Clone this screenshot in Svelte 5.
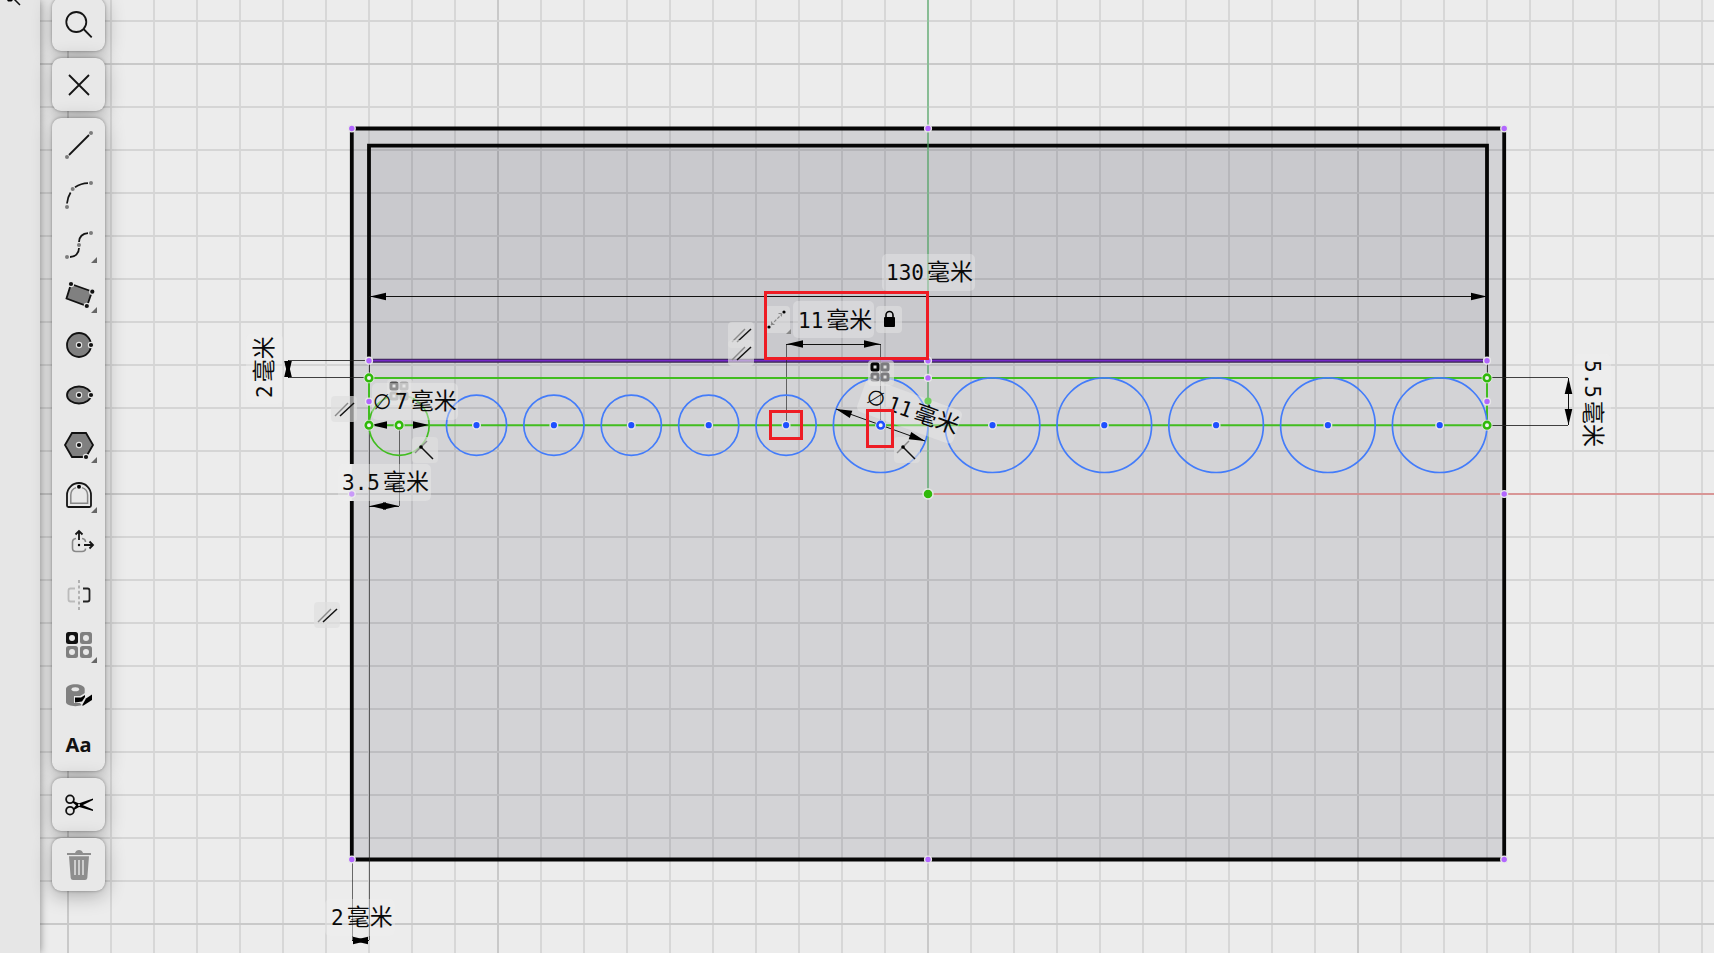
<script>
  // Canvas scale and origin: 1 mm = 8.6 units, y points down.
  const SCALE = 8.6;
  const X = (mm) => 928 + mm * SCALE;
  const Y = (mm) => 494 + mm * SCALE;

  const range = (from, to) => Array.from({ length: to - from + 1 }, (_, i) => from + i);
  const columns = range(-21, 18);
  const rows = range(-11, 10);

  // The sketch, in millimetres from the origin
  const left = -65;
  const right = 65;
  const baseLine = -8; // centre line of all holes
  const topLine = baseLine - 5.5;
  const pocket = topLine - 2;

  const smallHoles = [1, 2, 3, 4, 5].map((i) => -61.5 + i * 9);
  const largeHoles = [0, 1, 2, 3, 4, 5].map((i) => -5.5 + i * 13);

  const purplePoints = [
    [-67, -42.5], [0, -42.5], [67, -42.5],
    [-67, 42.5], [0, 42.5], [67, 42.5],
    [-67, 0], [67, 0],
    [left, pocket], [0, pocket], [right, pocket],
    [left, baseLine - 2.75], [right, baseLine - 2.75],
    [0, topLine],
  ];

  const greenPoints = [
    [left, topLine], [left, baseLine], [-61.5, baseLine],
    [right, topLine], [right, baseLine],
  ];

  const labels = [
    { value: "130", x: 886, y: 280, bg: [-4, -26, 93, 37] },
    { value: "11", x: 798, y: 328, bg: [-5, -27, 81, 37] },
    { value: "7", sign: true, x: 373, y: 409, bg: [-1, -26, 86, 37] },
    { value: "3.5", x: 342, y: 490, bg: [-4, -26, 93, 37] },
    { value: "2", x: 331, y: 925, bg: [-6, -26, 70, 37] },
    { value: "2", x: 272, y: 398, angle: -90, bg: [-6, -26, 70, 37] },
    { value: "5.5", x: 1585, y: 360, angle: 90, bg: [-6, -26, 96, 37] },
    { value: "11", sign: true, x: 865, y: 402, angle: 19.8, bg: [-6, -24, 102, 35] },
  ];
</script>

{#snippet corner()}
  <path d="M45 37v6h-6z" fill="#666" />
{/snippet}

{#snippet node(x, y)}
  <circle cx={x} cy={y} r="3.2" fill="#e6e6e6" />
  <circle cx={x} cy={y} r="2.1" fill="#111" />
{/snippet}

{#snippet arrow(x, y, angle)}
  <path d="M0 0L16 -3.8V3.8z" transform="translate({x} {y}) rotate({angle})" />
{/snippet}

{#snippet ring(x, y, color)}
  <circle cx={x} cy={y} r="5.4" fill="#e8e8e8" />
  <circle cx={x} cy={y} r="3.3" fill="#f2f2f2" stroke={color} stroke-width="2.6" />
{/snippet}

{#snippet parallel(x, y)}
  <g transform="translate({x} {y})">
    <rect class="badge" width="26" height="26" rx="4" />
    <path d="M4 20L17 7" stroke="#8a8a8a" stroke-width="1.5" />
    <path d="M9 20L23 7" stroke="#111" stroke-width="1.5" />
  </g>
{/snippet}

{#snippet tangent(x, y)}
  <g transform="translate({x} {y})">
    <rect class="badge" width="26" height="26" rx="4" />
    <path d="M3 16L15 4" stroke="#8a8a8a" stroke-width="1.5" />
    <path d="M9 10L21 22" stroke="#111" stroke-width="1.5" />
    <circle cx="9" cy="10" r="1.8" />
  </g>
{/snippet}

{#snippet pattern(x, y, first, rest)}
  <g transform="translate({x} {y})" fill="#e0e0e0" stroke-width="3">
    <rect class="badge" x="-7" y="-7" width="26" height="26" rx="4" />
    <rect x="-3" y="-3" width="6" height="6" rx="1" stroke={first} />
    <rect x="7" y="-3" width="6" height="6" rx="1" stroke={rest} />
    <rect x="-3" y="7" width="6" height="6" rx="1" stroke={rest} />
    <rect x="7" y="7" width="6" height="6" rx="1" stroke={rest} />
  </g>
{/snippet}

<div class="editor">
  <svg class="canvas" viewBox="0 0 1714 953" preserveAspectRatio="xMinYMin slice">
    <g stroke="#d5d5d5" stroke-width="1.8">
      {#each columns as i}
        <line x1={X(i * 5)} x2={X(i * 5)} y1="0" y2="953" class:major={i % 10 === 0} />
      {/each}
      {#each rows as i}
        <line x1="0" x2="1714" y1={Y(i * 5)} y2={Y(i * 5)} class:major={i % 10 === 0} />
      {/each}
    </g>

    <!-- Plate and pocket; the left edge is open behind the 3.5 label -->
    <rect x={X(-67)} y={Y(-42.5)} width={134 * SCALE} height={85 * SCALE} fill="#00001a" fill-opacity="0.106" />
    <rect x={X(left)} y={Y(-40.5)} width={130 * SCALE} height={(pocket + 40.5) * SCALE} fill="#00001a" fill-opacity="0.045" />
    <g fill="none" stroke="#060606" stroke-width="3.8">
      <path d="M{X(-67)} 464V{Y(-42.5)}H{X(67)}V{Y(42.5)}H{X(-67)}V501" />
      <path d="M{X(left)} {Y(pocket)}V{Y(-40.5)}H{X(right)}V{Y(pocket)}" />
    </g>
    <path d="M928 0V494" stroke="#55b36c" stroke-opacity="0.7" stroke-width="1.6" />
    <path d="M928 494H1714" stroke="#dc8484" stroke-width="1.6" />
    <path d="M{X(left)} {Y(pocket)}H{X(right)}" stroke="#37254c" stroke-width="4" />
    <path d="M{X(left)} {Y(pocket)}H{X(right)}" stroke="#7629c9" stroke-width="1.8" />

    <!-- Extension lines -->
    <g stroke="#222" stroke-opacity="0.85" stroke-width="1">
      <path d="M288 360.5H369M288 377.5H369M1487 377.5H1568M1487 425.5H1568M1487.5 360V378M369.5 360V378" />
      <path d="M369.5 425V940M399.5 425V506M352.5 860V940M786.5 344V425M880.5 344V425" stroke-opacity="0.65" />
    </g>

    <!-- Construction lines and holes -->
    <g fill="none" stroke="#42bd21" stroke-width="2">
      <path d="M{X(left)} {Y(topLine)}H{X(right)}V{Y(baseLine)}H{X(left)}z" />
      <circle cx={X(-61.5)} cy={Y(baseLine)} r={3.5 * SCALE} stroke-width="1.7" />
    </g>
    <g fill="none" stroke="#437cfa" stroke-width="1.7">
      {#each smallHoles as x}
        <circle cx={X(x)} cy={Y(baseLine)} r={3.5 * SCALE} />
      {/each}
      {#each largeHoles as x}
        <circle cx={X(x)} cy={Y(baseLine)} r={5.5 * SCALE} />
      {/each}
    </g>

    {#each purplePoints as [x, y]}
      <circle class="point" cx={X(x)} cy={Y(y)} r="3.4" fill="#b266ff" />
    {/each}
    {#each [...smallHoles, ...largeHoles.slice(1)] as x}
      <circle class="point" cx={X(x)} cy={Y(baseLine)} r="3.8" fill="#1f50ff" />
    {/each}
    <circle class="point" cx="928" cy="494" r="5" fill="#30b90a" />

    <!-- Constraint badges -->
    {@render parallel(331, 396)}
    {@render parallel(314, 602)}
    {@render parallel(728, 322)}
    {@render parallel(728, 340)}
    {@render tangent(412, 437)}
    {@render tangent(894, 437)}
    {@render pattern(394, 386, "#555", "#aaa")}
    {@render pattern(875, 367, "#050505", "#7c7c7f")}

    <!-- Dimension lines -->
    <g stroke="#111" stroke-width="1">
      <path d="M369 296.5H1487M786 344.5H881M1568.5 378V425M288.5 360V378M369 506.5H399M352 940.5H369M836 409L925 441" />
    </g>
    {@render arrow(370, 296.5, 0)}
    {@render arrow(1487, 296.5, 180)}
    {@render arrow(787, 344, 0)}
    {@render arrow(880, 344, 180)}
    {@render arrow(1568.5, 378, 90)}
    {@render arrow(1568.5, 425, -90)}
    {@render arrow(288, 361, 90)}
    {@render arrow(288, 377, -90)}
    {@render arrow(370, 506, 0)}
    {@render arrow(399, 506, 180)}
    {@render arrow(352, 940.5, 0)}
    {@render arrow(369, 940.5, 180)}
    {@render arrow(371, 425, 0)}
    {@render arrow(429, 425, 180)}
    {@render arrow(836, 409, 19.8)}
    {@render arrow(925, 441, 199.8)}

    {#each labels as { value, sign, x, y, angle, bg }}
      <g transform="translate({x} {y}) rotate({angle ?? 0})">
        <rect class="label" x={bg[0]} y={bg[1]} width={bg[2]} height={bg[3]} rx="5" />
        {#if sign}
          <text class="sign">∅</text>
        {/if}
        <text x={sign ? 22 : 0}>{value}<tspan class="unit" dx="3">毫米</tspan></text>
      </g>
    {/each}

    <circle cx="928" cy="401" r="3.6" fill="#70cf5e" />
    {#each greenPoints as [x, y]}
      {@render ring(X(x), Y(y), "#30b90a")}
    {/each}
    {@render ring(X(-5.5), Y(baseLine), "#1f50ff")}

    <!-- Dimension type and lock -->
    <g transform="translate(764 306)">
      <rect class="badge" width="26" height="27" rx="4" />
      <circle cx="5" cy="21" r="1.6" />
      <circle cx="20" cy="6" r="1.6" />
      <path d="M7 19L18 8" stroke="#888" stroke-width="1.2" stroke-dasharray="3 1.5" />
      <path d="M7.5 15.5V18.5H10.5M14.5 7.5H17.5V10.5" fill="none" stroke="#888" />
      <path d="M27 23v5h-5z" fill="#888" />
    </g>
    <g transform="translate(876 306)">
      <rect class="badge" width="26" height="27" rx="4" />
      <rect x="8" y="11" width="11" height="10" rx="1" />
      <path d="M10 12V9a3.5 3.5 0 0 1 7 0V12" fill="none" stroke="#000" stroke-width="1.6" />
    </g>

    <!-- Highlights -->
    <g fill="none" stroke="#ee1c24" stroke-width="3">
      <rect x="765.5" y="292.5" width="162" height="66" />
      <rect x="770.5" y="411.5" width="31" height="27" />
      <rect x="867.5" y="410.5" width="25" height="36" />
    </g>
  </svg>

  <aside class="panel">
    <svg width="40" height="8" viewBox="0 0 40 8" aria-hidden="true">
      <path d="M7 0h6l-1.5 1.5h-3.5z" />
      <path d="M14 -1L20 5" stroke="#111" stroke-width="1.5" />
    </svg>
  </aside>

  <nav class="toolbar" aria-label="Sketch tools">
    <button class="tool single" aria-label="Search">
      <svg viewBox="0 0 53 53" fill="none" stroke="#151515" stroke-width="1.8">
        <circle cx="24.3" cy="24" r="10" />
        <path d="M31.5 31L39.7 39.4" />
      </svg>
    </button>
    <button class="tool single" aria-label="Close">
      <svg viewBox="0 0 53 53" stroke="#151515" stroke-width="1.8">
        <path d="M17 17L37 37M37 17L17 37" />
      </svg>
    </button>

    <div class="group">
      <button class="tool" aria-label="Line">
        <svg viewBox="0 0 53 50">
          <path class="stroke" d="M17 35L37 15" />
          <g fill="#7c7c7c">
            <circle cx="15" cy="37" r="2" />
            <circle cx="39" cy="13" r="2" />
          </g>
        </svg>
      </button>
      <button class="tool" aria-label="Arc">
        <svg viewBox="0 0 53 50">
          <path class="stroke" d="M15 33.5A24 24 0 0 1 18.6 22.5M23 17.2A24 24 0 0 1 36 13.1" />
          <g fill="#7c7c7c">
            <circle cx="15" cy="37" r="2" />
            <circle cx="20.7" cy="19" r="2" />
            <circle cx="39" cy="13" r="2" />
          </g>
        </svg>
      </button>
      <button class="tool" aria-label="Spline">
        <svg viewBox="0 0 53 50">
          <path class="stroke" d="M18 37C23 37 27 33.5 27 28M27 22C27 17 30.5 13.3 36 13.1" />
          <g fill="#7c7c7c">
            <circle cx="15" cy="37" r="2" />
            <circle cx="27" cy="25" r="2" />
            <circle cx="39" cy="13" r="2" />
          </g>
          {@render corner()}
        </svg>
      </button>
      <button class="tool" aria-label="Rectangle">
        <svg viewBox="0 0 53 50">
          <path class="solid" d="M19 14L40 21.5L35 36L14.5 28.5z" />
          {@render node(19, 14)}
          {@render node(40.3, 21.7)}
          {@render node(34.8, 36)}
          {@render corner()}
        </svg>
      </button>
      <button class="tool" aria-label="Circle">
        <svg viewBox="0 0 53 50">
          <circle class="solid" cx="27" cy="25" r="12" />
          {@render node(27, 25)}
          {@render node(39, 25)}
        </svg>
      </button>
      <button class="tool" aria-label="Ellipse">
        <svg viewBox="0 0 53 50">
          <ellipse class="solid" cx="27" cy="25" rx="12" ry="8.5" />
          {@render node(27, 25)}
          {@render node(39, 25)}
        </svg>
      </button>
      <button class="tool" aria-label="Polygon">
        <svg viewBox="0 0 53 50">
          <path class="solid" d="M13 25L20 13H34L41 25L34 37H20z" />
          {@render node(27, 25)}
          {@render node(34, 37)}
          {@render corner()}
        </svg>
      </button>
      <button class="tool" aria-label="Offset">
        <svg viewBox="0 0 53 50">
          <path class="stroke" d="M15 25A12 12 0 0 1 39 25V35.5Q39 37 37.5 37H16.5Q15 37 15 35.5z" />
          <path d="M24 17.6Q18.8 19.5 18.8 25V33.2H35.6V25Q35.6 19.5 30 17.6" fill="none" stroke="#888" stroke-width="1.5" />
          <circle cx="27" cy="16.7" r="2" />
          {@render corner()}
        </svg>
      </button>
      <button class="tool" aria-label="Move">
        <svg viewBox="0 0 53 50">
          <path d="M24 18.5Q20.5 19 20.5 22V28Q20.5 31.5 24 31.5H30Q33.5 31.5 33.5 28.5M30 18.5Q33.5 19 33.5 22" fill="none" stroke="#888" stroke-width="1.6" />
          <path class="stroke" d="M27 20V11M23.5 14.5L27 11L30.5 14.5M32 25H41M37.5 21.5L41 25L37.5 28.5" />
          <circle cx="27" cy="25" r="1.2" />
        </svg>
      </button>
      <button class="tool" aria-label="Mirror">
        <svg viewBox="0 0 53 50" fill="none" stroke-width="1.8">
          <path d="M23 18.5H18.5Q16.5 18.5 16.5 20.5V29.5Q16.5 31.5 18.5 31.5H23" stroke="#bbb" />
          <path d="M27 10V40" stroke="#aaa" stroke-dasharray="3 2.4" />
          <path d="M31 18.5H35.5Q37.5 18.5 37.5 20.5V29.5Q37.5 31.5 35.5 31.5H31" stroke="#222" />
        </svg>
      </button>
      <button class="tool" aria-label="Pattern">
        <svg viewBox="0 0 53 50" fill="#808080">
          <rect x="14" y="12" width="12" height="12" rx="2.5" fill="#111" />
          <rect x="28" y="12" width="12" height="12" rx="2.5" />
          <rect x="14" y="26" width="12" height="12" rx="2.5" />
          <rect x="28" y="26" width="12" height="12" rx="2.5" />
          <g fill="#e8e8e8">
            <circle cx="20" cy="18" r="3" />
            <circle cx="34" cy="18" r="3" />
            <circle cx="20" cy="32" r="3" />
            <circle cx="34" cy="32" r="3" />
          </g>
          {@render corner()}
        </svg>
      </button>
      <button class="tool" aria-label="Project">
        <svg viewBox="0 0 53 50">
          <path d="M14 19C14 12.5 32.7 12.5 32.7 19V32C32.7 37.5 14 37.5 14 32z" fill="#808080" />
          <ellipse cx="23.3" cy="19.3" rx="3.8" ry="2" fill="#e8e8e8" />
          <path d="M22 26H28L33 23L41 21V30L31 37L28 33H22z" fill="#e8e8e8" />
          <path d="M23 27.5H29L33 25V27L30 31.5L23 32.5z" />
          <path d="M30 35.5L34 28.5L40 24.5V30L31.5 35.5z" />
        </svg>
      </button>
      <button class="tool text" aria-label="Text">Aa</button>
    </div>

    <button class="tool single" aria-label="Trim">
      <svg viewBox="0 0 53 53">
        <g fill="none" stroke="#111" stroke-width="1.8">
          <circle cx="18" cy="21.3" r="3.9" />
          <circle cx="18" cy="32.7" r="3.9" />
        </g>
        <path d="M21 22.7L26 25L41 31.6V33L25.5 28.5L20.5 24.5zM21 31.2L25 26L41 20.6V22L28 28.5L22 32z" />
        <circle cx="27" cy="27" r="1" fill="#e8e8e8" />
      </svg>
    </button>
    <button class="tool single" aria-label="Delete" disabled>
      <svg viewBox="0 0 53 53" fill="#8e8e8e">
        <path d="M15 15H23Q24 12 27 12T31 15H39V17H15zM17 18.3H37L35.3 40Q35 42 33 42H21Q19 42 18.7 40z" />
        <path d="M23 22V37M27 22V37M31 22V37" stroke="#e4e4e4" stroke-width="1.5" />
      </svg>
    </button>
  </nav>
</div>

<style>
  :global(body) {
    margin: 0;
    background: #ececec;
  }

  .editor {
    position: relative;
    display: flex;
    align-items: flex-start;
    gap: 12px;
    height: 100vh;
    overflow: hidden;
  }

  /* The drawing lies under the panel and the tools */
  .canvas {
    position: absolute;
    inset: 0;
    width: 100%;
    height: 100%;
  }

  .major {
    stroke: #c9c9c9;
    stroke-width: 2;
  }

  .badge {
    fill: #dedede;
    fill-opacity: 0.65;
    stroke: none;
  }

  .label {
    fill: #f0f0f0;
    fill-opacity: 0.38;
  }

  .point {
    stroke: #e8e8e8;
    stroke-width: 1.4;
  }

  text {
    font-family: "DejaVu Sans Mono", monospace;
    font-size: 21px;
    fill: #0a0a0a;
  }

  .sign {
    font-family: "DejaVu Sans", sans-serif;
  }

  .unit {
    font-family: "Noto Sans CJK SC", sans-serif;
    font-size: 23px;
  }

  .panel {
    position: relative;
    width: 40px;
    height: 100%;
    background: #e6e6e6;
    box-shadow: 0 0 8px rgba(0, 0, 0, 0.45);
  }

  .panel svg {
    display: block;
  }

  .toolbar {
    position: relative;
    display: flex;
    flex-direction: column;
    gap: 7px;
    margin-top: -2px;
  }

  .tool {
    display: block;
    width: 53px;
    height: 50px;
    padding: 0;
    border: 0;
    background: none;
    cursor: pointer;
  }

  .tool svg {
    display: block;
    width: 100%;
    height: 100%;
  }

  .single,
  .group {
    border-radius: 9px;
    background: #e8e8e8;
    box-shadow: 0 0 3px rgba(0, 0, 0, 0.35), 0 4px 20px rgba(0, 0, 0, 0.3);
  }

  .tool.single {
    height: 53px;
    background: #e8e8e8;
  }

  .group {
    padding: 2px 0 1px;
  }

  .text {
    padding-bottom: 2px;
    color: #111;
    font: bold 20px "Noto Sans", sans-serif;
  }

  .stroke {
    fill: none;
    stroke: #151515;
    stroke-width: 1.8;
  }

  .solid {
    fill: #808080;
    stroke: #111;
    stroke-width: 1.8;
  }
</style>
